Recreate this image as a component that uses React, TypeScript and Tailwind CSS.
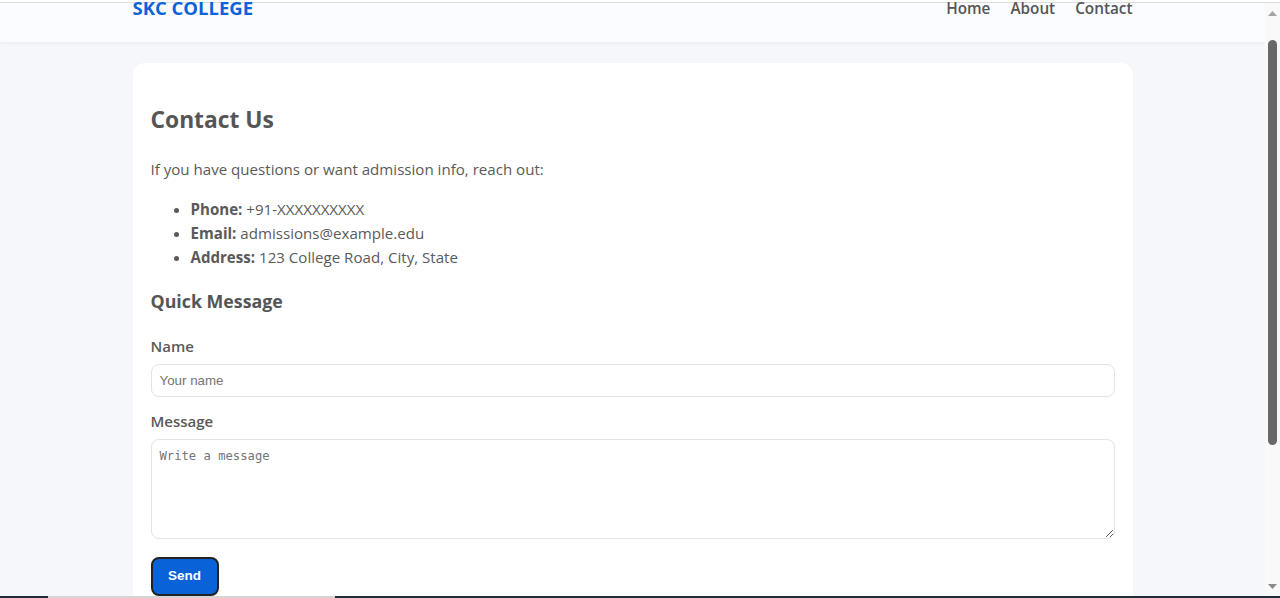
import React from "react";

export default function App() {
  const font = { fontFamily: '"Open Sans", "Noto Sans", sans-serif' };
  return (
    <div className="w-[1280px] h-[598px] overflow-hidden flex flex-col bg-[#f5f7fb]" style={font}>
      <div className="h-[3px] shrink-0 bg-white border-b border-[#dcdcdc]" />
      <div className="flex flex-1 min-h-0">
        <div className="w-[1265px] flex flex-col">
          <header className="h-[40px] shrink-0 bg-[#fbfcff] shadow-[0_1px_3px_rgba(0,0,0,0.04)] border-b border-[#eef0f5]">
            <div className="w-[1000px] mx-auto flex justify-between items-start -mt-[7px]">
              <div className="text-[18.5px] font-bold text-[#0b63d8] leading-[24px]">SKC COLLEGE</div>
              <nav className="flex gap-[20px] text-[15.3px] font-semibold text-[#555] leading-[24px]">
                <span>Home</span>
                <span>About</span>
                <span>Contact</span>
              </nav>
            </div>
          </header>
          <main className="pt-[20px] flex-1">
            <div className="w-[1000px] mx-auto bg-white rounded-[12px] px-[18px] pt-[39px] pb-[20px] text-[#5a5a5a]">
              <h1 className="text-[22.8px] font-bold leading-[36px] text-[#555]">Contact Us</h1>
              <p className="text-[15.1px] leading-[24px] mt-[19px]">If you have questions or want admission info, reach out:</p>
              <ul className="list-disc pl-[40px] mt-[16px] text-[15.1px] leading-[24px]">
                <li><b className="font-bold">Phone:</b> +91-XXXXXXXXXX</li>
                <li><b className="font-bold">Email:</b> admissions@example.edu</li>
                <li><b className="font-bold">Address:</b> 123 College Road, City, State</li>
              </ul>
              <h2 className="text-[17.8px] font-bold leading-[28px] mt-[18px] text-[#555]">Quick Message</h2>
              <label className="block text-[15px] font-semibold leading-[24px] mt-[19px]">Name</label>
              <input
                className="block w-full h-[33px] mt-[6px] border border-[#e3e3e3] rounded-[8px] px-[8px] text-[13.33px] placeholder:text-[#757575] outline-none"
                style={{ fontFamily: '"Liberation Sans", Arial, sans-serif' }}
                placeholder="Your name"
              />
              <label className="block text-[15px] font-semibold leading-[24px] mt-[12px]">Message</label>
              <textarea
                className="block w-full h-[100px] mt-[6px] border border-[#e3e3e3] rounded-[8px] px-[8px] pt-[7px] pb-[8px] text-[12.2px] placeholder:text-[#757575] outline-none"
                style={{ fontFamily: '"DejaVu Sans Mono", monospace' }}
                placeholder="Write a message"
              />
              <button
                className="mt-[18px] w-[68px] h-[39px] rounded-[8px] bg-[#0a62d8] border-2 border-[#222] text-white text-[13.5px] font-bold"
                style={{ fontFamily: '"Liberation Sans", Arial, sans-serif' }}
              >
                Send
              </button>
            </div>
          </main>
        </div>
        <div className="w-[15px] shrink-0 bg-[#f9f9f9] flex flex-col items-center">
          <svg width="9" height="6" viewBox="0 0 9 6" className="mt-[8px]">
            <path d="M0 5 L4.5 0 L9 5 Z" fill="#a3a3a3" />
          </svg>
          <div className="w-[9px] h-[405px] mt-[23px] rounded-[5px] bg-[#686868]" />
          <div className="flex-1" />
          <svg width="9" height="6" viewBox="0 0 9 6" className="mb-[6px]">
            <path d="M0 0 L9 0 L4.5 5 Z" fill="#8a8a8a" />
          </svg>
        </div>
      </div>
      <div className="h-[2px] shrink-0 flex">
        <div className="w-[48px] bg-[#1e2d3a]" />
        <div className="w-[287px] bg-[#d4d4d4]" />
        <div className="flex-1 bg-[#1e2d3a]" />
      </div>
    </div>
  );
}
